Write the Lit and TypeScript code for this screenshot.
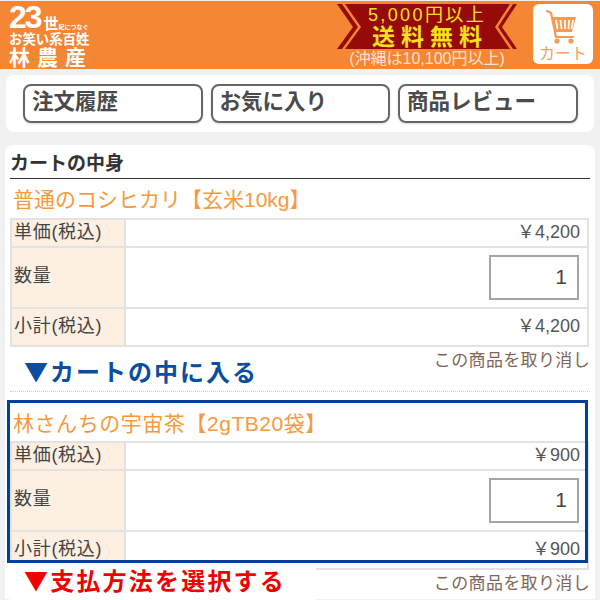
import { LitElement, html, css } from "lit";
import { customElement } from "lit/decorators.js";

const FONT = css`"Liberation Sans", "Noto Sans CJK JP", sans-serif`;

@customElement("app-root")
export class AppRoot extends LitElement {
  static styles = css`
    :host { display: block; width: 600px; height: 600px; overflow: hidden; background: #f1f1f1; font-family: ${FONT}; color: #444; position: relative; }
    .header { margin-top: 1px; height: 68px; background: #f58634; display: flex; align-items: flex-start; box-sizing: border-box; padding-left: 9px; }
    .logo { width: 80px; color: #fff; font-weight: 700; line-height: 1; white-space: nowrap; }
    .l1 { display: flex; align-items: flex-end; height: 32px; }
    .l1 b { font-size: 32px; letter-spacing: -2px; line-height: 32px; margin-right: 3px; }
    .l1 .w { font-size: 15px; margin-bottom: 2px; }
    .l1 .s { font-size: 6px; line-height: 8px; margin-bottom: 2px; }
    .l2 { font-size: 13.4px; line-height: 14px; height: 14px; }
    .l3 { font-size: 21px; height: 20px; letter-spacing: 7px; margin-top: 1px; line-height: 20px; }
    .promo { margin-left: 248px; width: 180px; padding-top: 3px; text-align: center; position: relative; }
    .ribbon { display: block; width: 180px; height: 45px; }
    .promo-text { position: absolute; left: -10px; right: -10px; top: 3px; color: #f7e11c; line-height: 1; white-space: nowrap; }
    .p1 { font-size: 18px; letter-spacing: 2.4px; height: 20px; line-height: 22px; }
    .p2 { font-size: 23px; font-weight: 700; letter-spacing: 6px; line-height: 26px; margin-left: 6px; }
    .p3 { color: #fde0c8; font-size: 16px; line-height: 18px; }
    .cart { margin-left: 16px; margin-top: 3px; width: 60px; height: 60px; background: #fff; border-radius: 6px; display: flex; flex-direction: column; align-items: center; color: #f9a25c; }
    .cart svg { display: block; margin-top: 6px; }
    .cart span { font-size: 16px; line-height: 18px; margin-top: 1px; }

    .nav { margin: 6px 6px 0; height: 57px; background: #fff; border-radius: 8px; display: flex; gap: 8px; padding: 9px 0 0 17px; box-sizing: border-box; }
    .btn { width: 179.5px; height: 39px; box-sizing: border-box; border: 2px solid #666; border-radius: 8px; font-size: 21.5px; font-weight: 700; color: #4a4a4a; padding-left: 7px; line-height: 32px; box-shadow: 0 1px 2px rgba(0,0,0,.15); white-space: nowrap; }

    .main { margin: 13px 5px 0; height: 454px; background: #fff; border-radius: 8px 8px 0 0; padding: 8px 5px 0; box-sizing: border-box; position: relative; }
    h2 { margin: 0; font-size: 19px; font-weight: 700; color: #333; line-height: 22px; border-bottom: 1.5px solid #333; height: 25px; box-sizing: content-box; white-space: nowrap; }
    .title { color: #f79a3e; font-size: 21px; line-height: 36px; height: 39px; box-sizing: border-box; padding: 3px 0 0 3px; white-space: nowrap; overflow: visible; }
    .title.second { margin-top: 10px; padding-top: 4px; letter-spacing: .55px; }
    table { border-collapse: collapse; width: 579px; font-size: 18px; line-height: 22px; }
    td { border: 2px solid #e2e2e2; padding: 0 2px 3px; box-sizing: border-box; }
    .r1 { height: 28px; } .r2 { height: 61px; } .r3 { height: 38px; }
    .k { width: 114px; background: #fdf0e3; color: #444; white-space: nowrap; letter-spacing: .7px; }
    .v { text-align: right; padding-right: 7px; color: #555; }
    .v.q { padding-bottom: 0; }
    .qty { display: block; width: 90px; height: 45px; margin: 0 1px 0 auto; box-sizing: border-box; border: 2px solid #a5a5a5; font-size: 21px; line-height: 39px; padding-right: 10px; color: #444; }
    .cancel { text-align: right; color: #806656; font-size: 17px; letter-spacing: .35px; line-height: 28px; height: 44px; white-space: nowrap; }
    .rule { border-top: 1.5px dotted #ccc; }
    .note { position: absolute; left: 5px; background: #fff; font-family: "Noto Sans CJK JP", sans-serif; font-size: 24px; font-weight: 700; letter-spacing: 2px; line-height: 26px; padding-left: 14px; white-space: nowrap; box-sizing: border-box; }
    .note.blue { top: 213px; color: #0a4ea0; }
    .note.red { top: 418px; color: #f10000; width: 306px; height: 37px; line-height: 33px; letter-spacing: 2.2px; }
    .sel { position: absolute; left: 2px; top: 254.5px; width: 581px; height: 163px; box-sizing: border-box; border: 3px solid #004098; pointer-events: none; }
  `;

  private table(price: string) {
    return html`<table>
      <tr class="r1"><td class="k">単価(税込)</td><td class="v">￥${price}</td></tr>
      <tr class="r2"><td class="k">数量</td><td class="v q"><span class="qty">1</span></td></tr>
      <tr class="r3"><td class="k">小計(税込)</td><td class="v">￥${price}</td></tr>
    </table>`;
  }

  render() {
    return html`
      <div class="header">
        <div class="logo">
          <div class="l1"><b>23</b><span class="w">世</span><span class="s">紀につなぐ</span></div>
          <div class="l2">お笑い系百姓</div>
          <div class="l3">林農産</div>
        </div>
        <div class="promo">
          <svg class="ribbon" viewBox="0 0 180 45">
            <polygon fill="#960a0a" points="0,0 5,0 21,23 5,45 0,45 16,23" />
            <polygon fill="#960a0a" points="180,0 176,0 161,23 176,45 180,45 165,23" />
            <polygon fill="#960a0a" points="8,0 173,0 158,23 173,45 8,45 24,23" />
          </svg>
          <div class="promo-text">
            <div class="p1">5,000円以上</div>
            <div class="p2">送料無料</div>
            <div class="p3">(沖縄は10,100円以上)</div>
          </div>
        </div>
        <div class="cart">
          <svg width="34" height="34" viewBox="0 0 34 34">
            <path d="M1 1 L5 3 L10 27 H27" fill="none" stroke="#f79a52" stroke-width="2.2" stroke-linecap="round" stroke-linejoin="round" />
            <path d="M6 7 H30 L26 22 H9 Z" fill="#f79a52" />
            <path d="M10 10 L11.5 19 M14.5 10 L15.5 19 M19 10 L19 19 M23 10 L22.5 19 M27 10 L25.5 19" stroke="#fff" stroke-width="1.7" fill="none" />
            <circle cx="11" cy="31" r="2.6" fill="#f79a52" />
            <circle cx="25" cy="31" r="2.6" fill="#f79a52" />
          </svg>
          <span>カート</span>
        </div>
      </div>
      <div class="nav">
        <div class="btn">注文履歴</div>
        <div class="btn">お気に入り</div>
        <div class="btn">商品レビュー</div>
      </div>
      <div class="main">
        <h2>カートの中身</h2>
        <div class="title">普通のコシヒカリ【玄米10kg】</div>
        ${this.table("4,200")}
        <div class="cancel">この商品を取り消し</div>
        <div class="rule"></div>
        <div class="title second">林さんちの宇宙茶【2gTB20袋】</div>
        ${this.table("900")}
        <div class="cancel">この商品を取り消し</div>
        <div class="note blue">▼カートの中に入る</div>
        <div class="note red">▼支払方法を選択する</div>
        <div class="sel"></div>
      </div>
    `;
  }
}
